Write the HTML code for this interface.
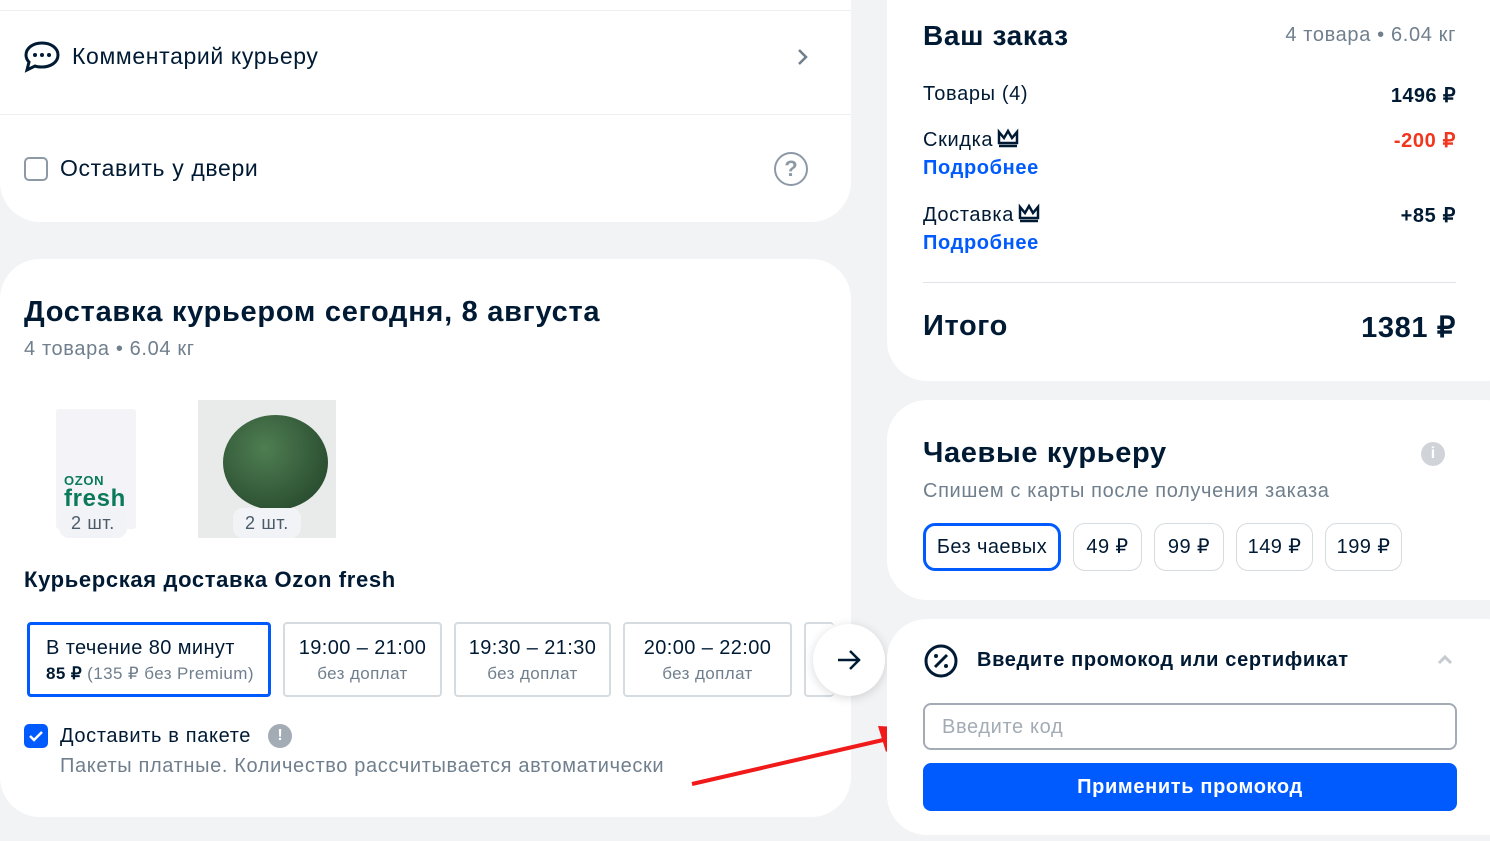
<!DOCTYPE html><html><head><meta charset="utf-8"><style>
*{box-sizing:border-box;margin:0;padding:0}
body{width:1490px;height:841px;background:#f2f3f5;font-family:"Liberation Sans",sans-serif;color:#001a34;position:relative;overflow:hidden;letter-spacing:0.04em}
.card{position:absolute;background:#fff;border-radius:40px}
.a{position:absolute;white-space:nowrap}
.blue{color:#005bff}
.grey{color:#707f8d}
.slot{position:absolute;top:622px;height:75px;border:2px solid #d6dbe0;border-radius:4px;text-align:center;font-size:20px;padding-top:13px;letter-spacing:0.02em}
.slot small{display:block;font-size:17px;color:#707f8d;margin-top:4px}
.tip{position:absolute;top:523px;height:48px;border:1px solid #d6dbe0;border-radius:12px;font-size:20px;text-align:center;line-height:46px;letter-spacing:0.02em}
.crown{display:inline-block;vertical-align:-2px;margin-left:4px}
</style></head><body>
<div class="card" style="left:0;top:-40px;width:851px;height:262px"></div>
<div style="position:absolute;left:0;top:10px;width:851px;height:1px;background:#eceef0"></div>
<div style="position:absolute;left:0;top:114px;width:851px;height:1px;background:#eceef0"></div>
<svg class="a" style="left:23px;top:40px" width="38" height="34" viewBox="0 0 38 34"><path d="M19 3C10 3 3 8 3 15c0 3 1 5 3 7l-2 8 8-4c2 1 4 1 7 1 9 0 16-5 16-12S28 3 19 3z" fill="none" stroke="#001a34" stroke-width="3"/><circle cx="12" cy="15" r="2" fill="#001a34"/><circle cx="19" cy="15" r="2" fill="#001a34"/><circle cx="26" cy="15" r="2" fill="#001a34"/></svg>
<div class="a" style="left:72px;top:43px;font-size:23px">Комментарий курьеру</div>
<svg class="a" style="left:797px;top:48px" width="12" height="18"><path d="M2 2l7 7-7 7" fill="none" stroke="#707f8d" stroke-width="2.5"/></svg>
<div class="a" style="left:24px;top:157px;width:24px;height:24px;border:2px solid #8d9aa6;border-radius:5px"></div>
<div class="a" style="left:60px;top:155px;font-size:23px">Оставить у двери</div>
<div class="a" style="left:774px;top:152px;width:34px;height:34px;border:2.5px solid #8d9aa6;border-radius:50%;text-align:center;line-height:29px;font-size:22px;color:#8d9aa6;font-weight:bold;letter-spacing:0">?</div>

<div class="card" style="left:0;top:259px;width:851px;height:558px"></div>
<div class="a" style="left:24px;top:296px;font-size:29px;font-weight:bold;letter-spacing:0.025em">Доставка курьером сегодня, 8 августа</div>
<div class="a grey" style="left:24px;top:338px;font-size:20px">4 товара • 6.04 кг</div>
<div class="a" style="left:56px;top:409px;width:80px;height:120px;background:#f4f4f8;border-radius:3px"><div style="position:absolute;left:8px;top:64px;color:#0a7a5a;font-weight:bold;font-size:13px">OZON</div><div style="position:absolute;left:8px;top:76px;color:#0a7a5a;font-weight:bold;font-size:24px">fresh</div></div>
<div class="a" style="left:59px;top:508px;width:68px;height:30px;background:#f2f3f6;border-radius:10px;text-align:center;line-height:30px;font-size:18px;color:#4a5b6c">2 шт.</div>
<div class="a" style="left:198px;top:400px;width:138px;height:138px;background:#e9eaea"><div style="position:absolute;left:25px;top:15px;width:105px;height:95px;border-radius:50%;background:radial-gradient(circle at 40% 35%,#4f7e52,#1f3f26)"></div></div>
<div class="a" style="left:233px;top:508px;width:68px;height:30px;background:#f2f3f6;border-radius:10px;text-align:center;line-height:30px;font-size:18px;color:#4a5b6c">2 шт.</div>
<div class="a" style="left:24px;top:567px;font-size:22px;font-weight:bold">Курьерская доставка Ozon fresh</div>
<div class="slot" style="left:27px;width:244px;border:3px solid #005bff;text-align:left;padding-left:16px;padding-top:12px">В течение 80 минут<small style="color:#707f8d"><b style="color:#001a34">85 ₽</b> (135 ₽ без Premium)</small></div>
<div class="slot" style="left:283px;width:159px">19:00 – 21:00<small>без доплат</small></div>
<div class="slot" style="left:454px;width:157px">19:30 – 21:30<small>без доплат</small></div>
<div class="slot" style="left:623px;width:169px">20:00 – 22:00<small>без доплат</small></div>
<div class="slot" style="left:804px;width:30px;border-right:none"></div>
<div class="a" style="left:813px;top:624px;width:72px;height:72px;border-radius:50%;background:#fff;box-shadow:0 2px 10px rgba(0,0,0,.15)"><svg style="position:absolute;left:23px;top:24px" width="26" height="24"><path d="M2 12h22M14 3l9 9-9 9" fill="none" stroke="#001a34" stroke-width="2.5"/></svg></div>
<div class="a" style="left:24px;top:724px;width:24px;height:24px;background:#005bff;border-radius:5px"><svg width="24" height="24"><path d="M6 12l4 4 8-8" fill="none" stroke="#fff" stroke-width="2.5"/></svg></div>
<div class="a" style="left:60px;top:725px;font-size:20px">Доставить в пакете</div>
<div class="a" style="left:268px;top:724px;width:24px;height:24px;border-radius:50%;background:#a3acb5;color:#fff;text-align:center;line-height:24px;font-weight:bold;font-size:16px;letter-spacing:0">!</div>
<div class="a grey" style="left:60px;top:755px;font-size:20px">Пакеты платные. Количество рассчитывается автоматически</div>
<svg class="a" style="left:688px;top:720px" width="230" height="70"><path d="M4 64L195 20" stroke="#f01a1a" stroke-width="4"/><path d="M226 8L190 6 198 32z" fill="#f01a1a"/></svg>

<div class="card" style="left:887px;top:-40px;width:640px;height:421px"></div>
<div class="a" style="left:923px;top:20px;font-size:28px;font-weight:bold">Ваш заказ</div>
<div class="a grey" style="right:34px;top:24px;font-size:20px">4 товара • 6.04 кг</div>
<div class="a" style="left:923px;top:83px;font-size:20px">Товары (4)</div>
<div class="a" style="right:34px;top:83px;font-size:20px;font-weight:bold;letter-spacing:0.02em">1496 ₽</div>
<div class="a" style="left:923px;top:128px;font-size:20px">Скидка<svg class="crown" width="22" height="20"><path d="M2 4l5 6 4-7 4 7 5-6v11H2z M2 18h18" fill="none" stroke="#001a34" stroke-width="2.5"/></svg></div>
<div class="a" style="right:34px;top:128px;font-size:20px;font-weight:bold;color:#f1361d">-200 ₽</div>
<div class="a blue" style="left:923px;top:157px;font-size:20px;font-weight:bold">Подробнее</div>
<div class="a" style="left:923px;top:203px;font-size:20px">Доставка<svg class="crown" width="22" height="20"><path d="M2 4l5 6 4-7 4 7 5-6v11H2z M2 18h18" fill="none" stroke="#001a34" stroke-width="2.5"/></svg></div>
<div class="a" style="right:34px;top:203px;font-size:20px;font-weight:bold">+85 ₽</div>
<div class="a blue" style="left:923px;top:232px;font-size:20px;font-weight:bold">Подробнее</div>
<div style="position:absolute;left:923px;top:282px;width:533px;height:1px;background:#e0e4e8"></div>
<div class="a" style="left:923px;top:310px;font-size:29px;font-weight:bold">Итого</div>
<div class="a" style="right:34px;top:310px;font-size:29px;font-weight:bold">1381 ₽</div>

<div class="card" style="left:887px;top:400px;width:640px;height:200px"></div>
<div class="a" style="left:923px;top:437px;font-size:29px;font-weight:bold">Чаевые курьеру</div>
<div class="a" style="left:1421px;top:442px;width:24px;height:24px;border-radius:50%;background:#d0d4d9;color:#fff;text-align:center;line-height:24px;font-weight:bold;font-size:16px;letter-spacing:0">i</div>
<div class="a grey" style="left:923px;top:480px;font-size:20px">Спишем с карты после получения заказа</div>
<div class="tip" style="left:923px;width:138px;border:3px solid #005bff;line-height:42px">Без чаевых</div>
<div class="tip" style="left:1073px;width:69px">49 ₽</div>
<div class="tip" style="left:1154px;width:70px">99 ₽</div>
<div class="tip" style="left:1236px;width:77px">149 ₽</div>
<div class="tip" style="left:1325px;width:77px">199 ₽</div>

<div class="card" style="left:887px;top:619px;width:640px;height:216px"></div>
<svg class="a" style="left:923px;top:643px" width="36" height="36"><circle cx="18" cy="18" r="15" fill="none" stroke="#001a34" stroke-width="3"/><path d="M12 24L24 12" stroke="#001a34" stroke-width="3"/><circle cx="13" cy="13" r="2" fill="#001a34"/><circle cx="23" cy="23" r="2" fill="#001a34"/></svg>
<div class="a" style="left:977px;top:649px;font-size:20px;font-weight:bold">Введите промокод или сертификат</div>
<svg class="a" style="left:1437px;top:654px" width="16" height="12"><path d="M2 9l6-6 6 6" fill="none" stroke="#c4cad0" stroke-width="3"/></svg>
<div class="a" style="left:923px;top:703px;width:534px;height:47px;border:2px solid #a3acb5;border-radius:8px;font-size:20px;color:#a3acb5;padding:11px 17px">Введите код</div>
<div class="a" style="left:923px;top:763px;width:534px;height:48px;background:#005bff;border-radius:8px;color:#fff;font-size:20px;font-weight:bold;text-align:center;line-height:48px">Применить промокод</div>
</body></html>
